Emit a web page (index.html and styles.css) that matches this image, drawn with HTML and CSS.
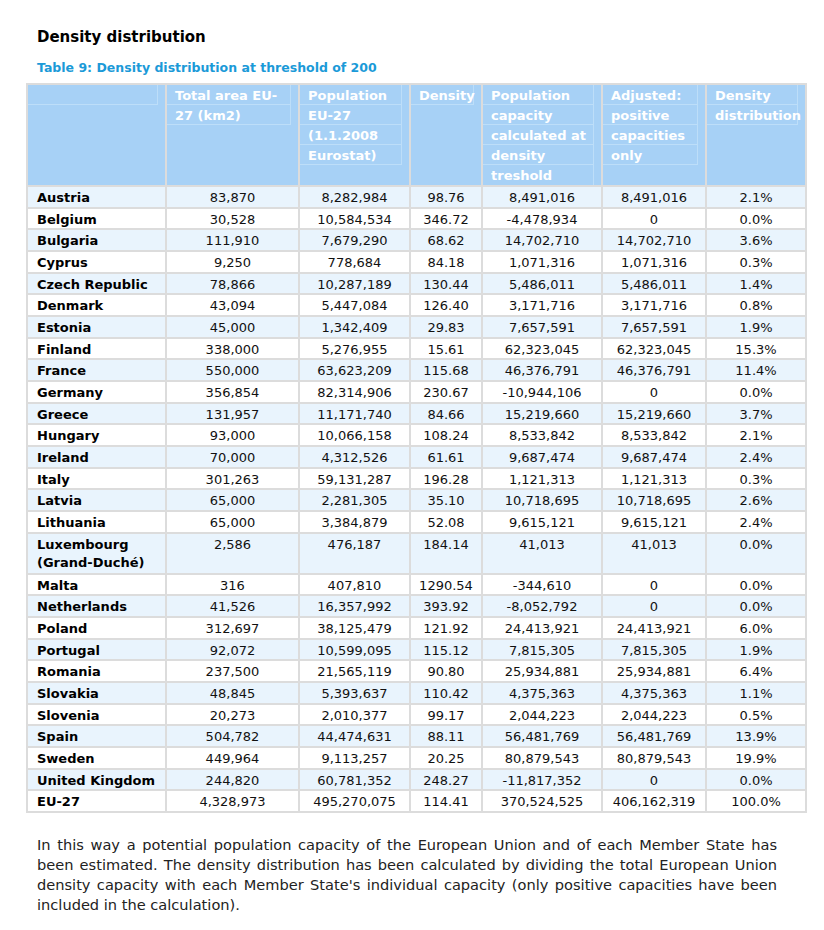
FILE: index.html
```html
<!DOCTYPE html>
<html>
<head>
<meta charset="utf-8">
<link rel="stylesheet" href="styles.css">
</head>
<body>
<div class="page">
  <h2 class="title">Density distribution</h2>
  <div class="caption">Table 9: Density distribution at threshold of 200</div>
  <table class="data">
    <colgroup>
      <col class="c1"><col class="c2"><col class="c3"><col class="c4"><col class="c5"><col class="c6"><col class="c7">
    </colgroup>
    <thead>
      <tr>
        <th><div class="inner"><div class="ln">&nbsp;</div></div></th>
        <th><div class="inner"><div class="ln">Total area EU-</div><div class="ln">27 (km2)</div></div></th>
        <th><div class="inner"><div class="ln">Population</div><div class="ln">EU-27</div><div class="ln">(1.1.2008</div><div class="ln">Eurostat)</div></div></th>
        <th><div class="inner"><div class="ln">Density</div></div></th>
        <th><div class="inner"><div class="ln">Population</div><div class="ln">capacity</div><div class="ln">calculated at</div><div class="ln">density</div><div class="ln last">treshold</div></div></th>
        <th><div class="inner"><div class="ln">Adjusted:</div><div class="ln">positive</div><div class="ln">capacities</div><div class="ln">only</div></div></th>
        <th><div class="inner"><div class="ln">Density</div><div class="ln">distribution</div></div></th>
      </tr>
    </thead>
    <tbody>
      <tr><td>Austria</td><td>83,870</td><td>8,282,984</td><td>98.76</td><td>8,491,016</td><td>8,491,016</td><td>2.1%</td></tr>
      <tr><td>Belgium</td><td>30,528</td><td>10,584,534</td><td>346.72</td><td>-4,478,934</td><td>0</td><td>0.0%</td></tr>
      <tr><td>Bulgaria</td><td>111,910</td><td>7,679,290</td><td>68.62</td><td>14,702,710</td><td>14,702,710</td><td>3.6%</td></tr>
      <tr><td>Cyprus</td><td>9,250</td><td>778,684</td><td>84.18</td><td>1,071,316</td><td>1,071,316</td><td>0.3%</td></tr>
      <tr><td>Czech Republic</td><td>78,866</td><td>10,287,189</td><td>130.44</td><td>5,486,011</td><td>5,486,011</td><td>1.4%</td></tr>
      <tr><td>Denmark</td><td>43,094</td><td>5,447,084</td><td>126.40</td><td>3,171,716</td><td>3,171,716</td><td>0.8%</td></tr>
      <tr><td>Estonia</td><td>45,000</td><td>1,342,409</td><td>29.83</td><td>7,657,591</td><td>7,657,591</td><td>1.9%</td></tr>
      <tr><td>Finland</td><td>338,000</td><td>5,276,955</td><td>15.61</td><td>62,323,045</td><td>62,323,045</td><td>15.3%</td></tr>
      <tr><td>France</td><td>550,000</td><td>63,623,209</td><td>115.68</td><td>46,376,791</td><td>46,376,791</td><td>11.4%</td></tr>
      <tr><td>Germany</td><td>356,854</td><td>82,314,906</td><td>230.67</td><td>-10,944,106</td><td>0</td><td>0.0%</td></tr>
      <tr><td>Greece</td><td>131,957</td><td>11,171,740</td><td>84.66</td><td>15,219,660</td><td>15,219,660</td><td>3.7%</td></tr>
      <tr><td>Hungary</td><td>93,000</td><td>10,066,158</td><td>108.24</td><td>8,533,842</td><td>8,533,842</td><td>2.1%</td></tr>
      <tr><td>Ireland</td><td>70,000</td><td>4,312,526</td><td>61.61</td><td>9,687,474</td><td>9,687,474</td><td>2.4%</td></tr>
      <tr><td>Italy</td><td>301,263</td><td>59,131,287</td><td>196.28</td><td>1,121,313</td><td>1,121,313</td><td>0.3%</td></tr>
      <tr><td>Latvia</td><td>65,000</td><td>2,281,305</td><td>35.10</td><td>10,718,695</td><td>10,718,695</td><td>2.6%</td></tr>
      <tr><td>Lithuania</td><td>65,000</td><td>3,384,879</td><td>52.08</td><td>9,615,121</td><td>9,615,121</td><td>2.4%</td></tr>
      <tr class="tall"><td>Luxembourg<br>(Grand-Duché)</td><td>2,586</td><td>476,187</td><td>184.14</td><td>41,013</td><td>41,013</td><td>0.0%</td></tr>
      <tr><td>Malta</td><td>316</td><td>407,810</td><td>1290.54</td><td>-344,610</td><td>0</td><td>0.0%</td></tr>
      <tr><td>Netherlands</td><td>41,526</td><td>16,357,992</td><td>393.92</td><td>-8,052,792</td><td>0</td><td>0.0%</td></tr>
      <tr><td>Poland</td><td>312,697</td><td>38,125,479</td><td>121.92</td><td>24,413,921</td><td>24,413,921</td><td>6.0%</td></tr>
      <tr><td>Portugal</td><td>92,072</td><td>10,599,095</td><td>115.12</td><td>7,815,305</td><td>7,815,305</td><td>1.9%</td></tr>
      <tr><td>Romania</td><td>237,500</td><td>21,565,119</td><td>90.80</td><td>25,934,881</td><td>25,934,881</td><td>6.4%</td></tr>
      <tr><td>Slovakia</td><td>48,845</td><td>5,393,637</td><td>110.42</td><td>4,375,363</td><td>4,375,363</td><td>1.1%</td></tr>
      <tr><td>Slovenia</td><td>20,273</td><td>2,010,377</td><td>99.17</td><td>2,044,223</td><td>2,044,223</td><td>0.5%</td></tr>
      <tr><td>Spain</td><td>504,782</td><td>44,474,631</td><td>88.11</td><td>56,481,769</td><td>56,481,769</td><td>13.9%</td></tr>
      <tr><td>Sweden</td><td>449,964</td><td>9,113,257</td><td>20.25</td><td>80,879,543</td><td>80,879,543</td><td>19.9%</td></tr>
      <tr><td>United Kingdom</td><td>244,820</td><td>60,781,352</td><td>248.27</td><td>-11,817,352</td><td>0</td><td>0.0%</td></tr>
      <tr><td>EU-27</td><td>4,328,973</td><td>495,270,075</td><td>114.41</td><td>370,524,525</td><td>406,162,319</td><td>100.0%</td></tr>
    </tbody>
  </table>
  <p class="text">In this way a potential population capacity of the European Union and of each Member State has been estimated. The density distribution has been calculated by dividing the total European Union density capacity with each Member State's individual capacity (only positive capacities have been included in the calculation).</p>
</div>
</body>
</html>
```
FILE: styles.css
```css
html, body {
  margin: 0;
  padding: 0;
  background: #ffffff;
}
.page {
  padding: 27px 19px 0 26px;
  font-family: "DejaVu Sans", Verdana, sans-serif;
  color: #000;
}
.title {
  margin: 0 0 11px 11px;
  font-size: 15px;
  line-height: 20px;
  font-weight: bold;
  color: #000;
}
.caption {
  margin: 0 0 5px 11px;
  font-size: 12.5px;
  line-height: 20px;
  font-weight: bold;
  color: #1b9ad8;
}
.data {
  width: 779px;
  border-collapse: collapse;
  table-layout: fixed;
  border: 2px solid #dcdcdc;
}
.c1 { width: 139px; }
.c2 { width: 133px; }
.c3 { width: 111px; }
.c4 { width: 72px; }
.c5 { width: 120px; }
.c6 { width: 104px; }
.c7 { width: 100px; }
.data th {
  background: #a7d1f6;
  border: 2px solid #dcdcdc;
  padding: 0;
  vertical-align: top;
  text-align: left;
  color: #ffffff;
  font-size: 13px;
  font-weight: bold;
  height: 100px;
}
.inner {
  margin-right: 7px;
  border-right: 1px solid #bddef9;
}
.ln {
  padding: 3px 0 0 8px;
  line-height: 16px;
  border-bottom: 1px solid #bddef9;
  white-space: nowrap;
}
.ln.last {
  border-bottom-color: transparent;
}
.data td {
  border: 2px solid #dcdcdc;
  padding: 2px 0 0 0;
  font-size: 13px;
  line-height: 17.65px;
  text-align: center;
  vertical-align: top;
  color: #111;
}
.data tr.tall td {
  line-height: 18.65px;
}
.data td:first-child {
  text-align: left;
  padding-left: 9px;
  font-weight: bold;
  color: #000;
}
.data tbody tr:nth-child(odd) td {
  background: #e9f4fd;
}
.text {
  margin: 22px 0 0 11px;
  width: 740px;
  font-size: 14.6px;
  line-height: 20px;
  text-align: justify;
  color: #222;
}
```
